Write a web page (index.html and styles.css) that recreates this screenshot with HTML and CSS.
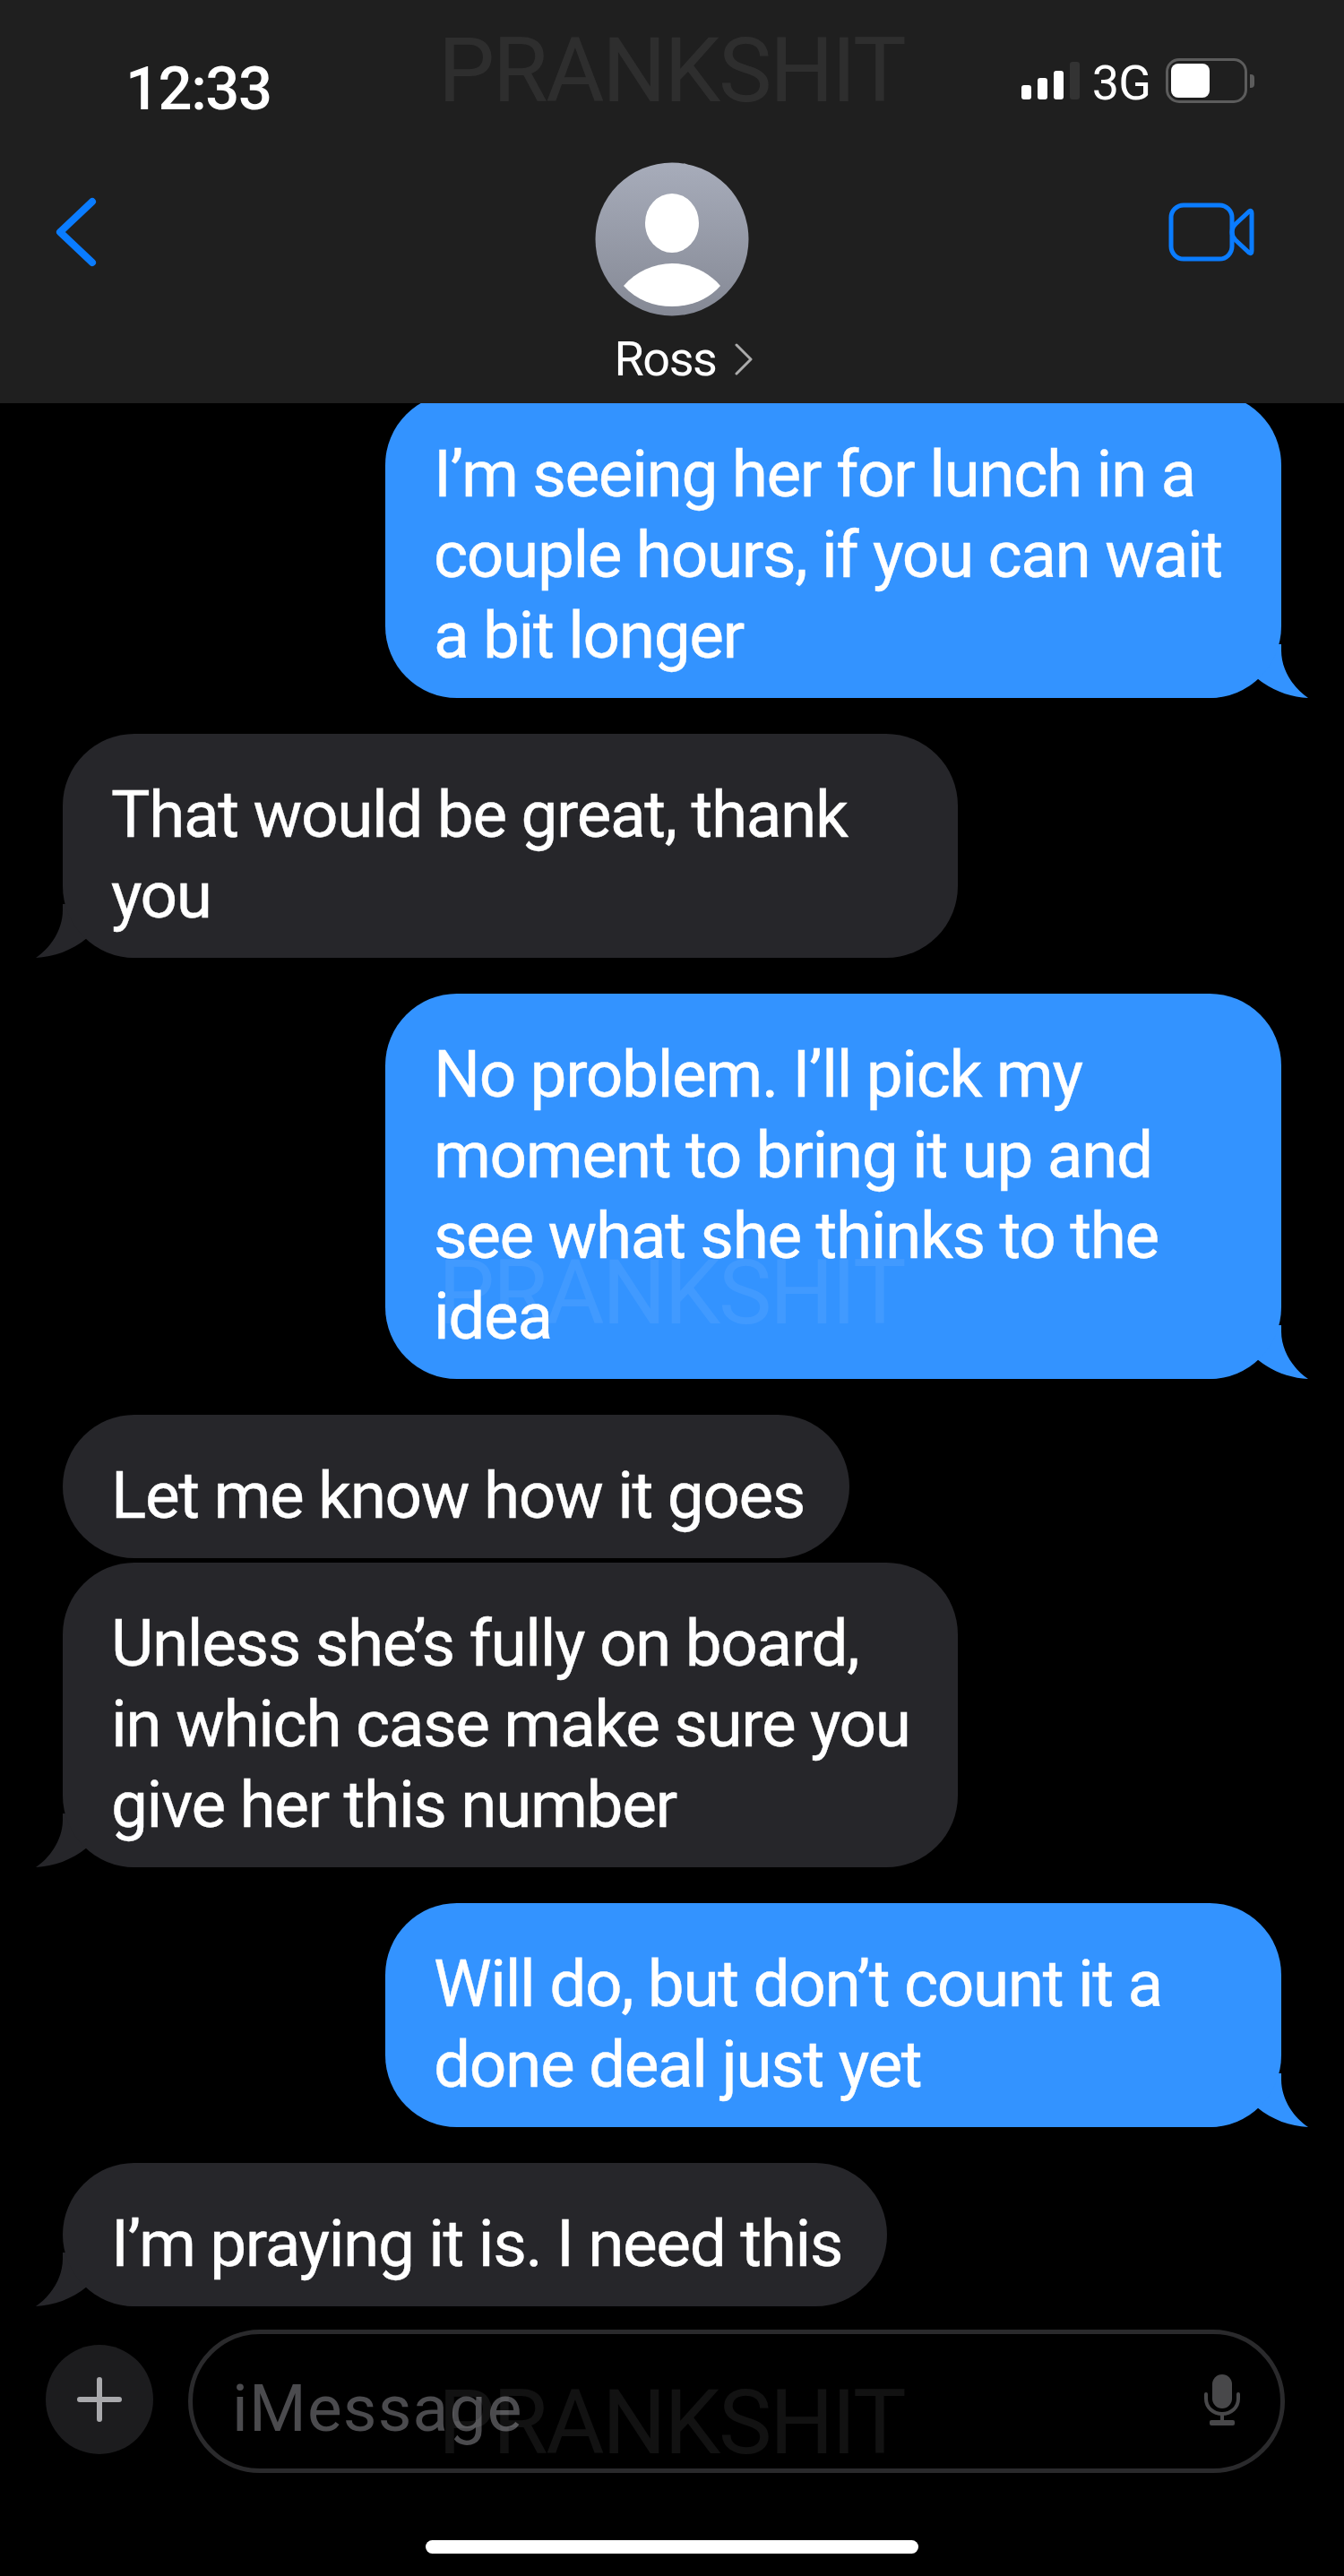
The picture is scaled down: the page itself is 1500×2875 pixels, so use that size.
FILE: index.html
```html
<!DOCTYPE html>
<html lang="en">
<head>
  <meta charset="UTF-8">
  <title>Ross - Messages</title>
  <link rel="stylesheet" href="styles.css">
</head>
<body>
  <div class="screen">
    <header class="header">
      <div class="status-bar">
        <span class="time">12:33</span>
        <div class="status-icons">
          <div class="signal">
            <span class="bar bar-1"></span>
            <span class="bar bar-2"></span>
            <span class="bar bar-3"></span>
            <span class="bar bar-4"></span>
          </div>
          <span class="network">3G</span>
          <div class="battery"><span class="battery-fill"></span></div>
          <span class="battery-cap"></span>
        </div>
      </div>

      <div class="nav-bar">
        <svg class="back-icon" width="46" height="78" viewBox="0 0 46 78">
          <path d="M41 5 L5 39 L41 73" fill="none" stroke="#0a7cff" stroke-width="8" stroke-linecap="round" stroke-linejoin="round"/>
        </svg>

        <div class="contact">
          <svg class="avatar" width="172" height="172" viewBox="0 0 172 172">
            <defs>
              <linearGradient id="avatar-bg" x1="0" y1="0" x2="0" y2="1">
                <stop offset="0" stop-color="#a7acba"/>
                <stop offset="1" stop-color="#858995"/>
              </linearGradient>
            </defs>
            <circle cx="86" cy="86" r="85.5" fill="url(#avatar-bg)"/>
            <ellipse cx="86" cy="68" rx="30" ry="33" fill="#fff"/>
            <path d="M32 138 C46 122 66 113 86 113 C106 113 126 122 140 138 C126 154 106 161 86 161 C66 161 46 154 32 138 Z" fill="#fff"/>
          </svg>
          <div class="contact-name">
            <span>Ross</span>
            <svg width="20" height="36" viewBox="0 0 20 36">
              <path d="M2 2 L18 18 L2 34" fill="none" stroke="#ababab" stroke-width="3" stroke-linecap="round" stroke-linejoin="round"/>
            </svg>
          </div>
        </div>

        <svg class="video-icon" width="96" height="66" viewBox="0 0 96 66">
          <rect x="3" y="3" width="68" height="60" rx="14" fill="none" stroke="#0a7cff" stroke-width="5"/>
          <path d="M71 33 Q71 28 75 24 L90 10 Q93 8 93 12 L93 54 Q93 58 90 56 L75 42 Q71 38 71 33 Z" fill="none" stroke="#0a7cff" stroke-width="5" stroke-linejoin="round"/>
        </svg>
      </div>
    </header>

    <main class="thread">
      <div class="bubble sent tail">I’m seeing her for lunch in a couple hours, if you can wait a bit longer</div>
      <div class="bubble received tail">That would be great, thank you</div>
      <div class="bubble sent tail">No problem. I’ll pick my moment to bring it up and see what she thinks to the idea</div>
      <div class="group">
        <div class="bubble received">Let me know how it goes</div>
        <div class="bubble received tail">Unless she’s fully on board, in which case make sure you give her this number</div>
      </div>
      <div class="bubble sent tail">Will do, but don’t count it a done deal just yet</div>
      <div class="bubble received tail">I’m praying it is. I need this</div>
    </main>

    <footer class="composer">
      <div class="plus-button">
        <svg width="50" height="50" viewBox="0 0 50 50">
          <path d="M25 3 V47 M3 25 H47" stroke="#a9a9ac" stroke-width="6" stroke-linecap="round"/>
        </svg>
      </div>
      <div class="input">
        <span class="placeholder">iMessage</span>
        <svg class="mic-icon" width="40" height="58" viewBox="0 0 40 58">
          <rect x="9" y="0" width="22" height="38" rx="11" fill="#48484a"/>
          <path d="M2 22 V27 C2 37 10 44 20 44 C30 44 38 37 38 27 V22" fill="none" stroke="#48484a" stroke-width="4" stroke-linecap="round"/>
          <path d="M20 44 V53" stroke="#48484a" stroke-width="4"/>
          <rect x="6" y="51" width="28" height="6" rx="2" fill="#48484a"/>
        </svg>
      </div>
    </footer>
    <div class="home-bar"></div>

    <span class="watermark mark-top">PRANKSHIT</span>
    <span class="watermark mark-middle">PRANKSHIT</span>
    <span class="watermark mark-bottom">PRANKSHIT</span>
  </div>
</body>
</html>
```
FILE: styles.css
```css
body {
  margin: 0;
  background-color: #000;
  color: #fff;
  font-family: Roboto, "Liberation Sans", sans-serif;
}
.screen {
  position: relative;
  width: 1500px;
  height: 2875px;
  overflow: hidden;
  background-color: #000;
}

/* header */
.header {
  position: relative;
  z-index: 1;
  height: 450px;
  background-color: #1f1f1f;
}
.status-bar {
  display: flex;
  justify-content: space-between;
  align-items: flex-start;
  padding: 66px 100px 0 140px;
  height: 120px;
  box-sizing: border-box;
}
.time {
  font-size: 67px;
  font-weight: 500;
  line-height: 66px;
  letter-spacing: -1.5px;
}
.status-icons {
  display: flex;
  align-items: flex-start;
}
.signal {
  display: flex;
  align-items: flex-end;
  gap: 7px;
  height: 42px;
  margin: 3px 14px 0 0;
}
.bar {
  width: 11px;
  background-color: #fff;
  border-radius: 3px;
}
.bar-1 { height: 16px; }
.bar-2 { height: 24px; }
.bar-3 { height: 32px; }
.bar-4 { height: 42px; background-color: #333; }
.network {
  font-size: 54px;
  line-height: 52px;
  letter-spacing: -1px;
  margin: 1px 17px 0 0;
}
.battery {
  width: 91px;
  height: 50px;
  margin-top: -1px;
  box-sizing: border-box;
  padding: 3px;
  border: 3px solid #5c5c5c;
  border-radius: 15px;
}
.battery-fill {
  display: block;
  width: 43px;
  height: 38px;
  background-color: #fff;
  border-radius: 8px;
}
.battery-cap {
  width: 5px;
  height: 15px;
  margin: 17px 0 0 3px;
  background-color: #5c5c5c;
  border-radius: 0 4px 4px 0;
}
.nav-bar {
  display: grid;
  grid-template-columns: 1fr auto 1fr;
  align-items: start;
  padding: 0 62px;
}
.back-icon {
  margin-top: 100px;
}
.video-icon {
  justify-self: end;
  margin: 106px 38px 0 0;
}
.contact {
  display: flex;
  flex-direction: column;
  align-items: center;
  margin-top: 61px;
}
.contact-name {
  display: flex;
  align-items: center;
  gap: 21px;
  margin: 18px 0 0 26px;
  font-size: 54px;
  line-height: 60px;
  letter-spacing: -1.5px;
}

/* messages */
.thread {
  display: flex;
  flex-direction: column;
  gap: 40px;
  margin-top: -11px;
  padding: 0 70px;
  isolation: isolate;
}
.group {
  display: flex;
  flex-direction: column;
  gap: 5px;
}
.bubble {
  position: relative;
  box-sizing: border-box;
  width: fit-content;
  padding: 45px 50px 25px 54px;
  border-radius: 80px;
  font-size: 73px;
  line-height: 90px;
  letter-spacing: -1.4px;
  -webkit-text-stroke: 0.4px #fff;
}
.sent {
  align-self: flex-end;
  max-width: 1000px;
  background-color: #3393ff;
}
.received {
  max-width: 999px;
  background-color: #26262a;
}
.tail::after {
  content: "";
  position: absolute;
  z-index: -1;
  bottom: 0;
  width: 120px;
  height: 60px;
  background-color: inherit;
  clip-path: path("M90 0 L90 7 C90 30 105 50 120 60 C100 59 80 52 63 38 C50 50 30 60 7 60 L0 60 L0 0 Z");
}
.sent.tail::after {
  right: -30px;
}
.received.tail::after {
  left: -30px;
  transform: scaleX(-1);
}

/* composer */
.composer {
  display: flex;
  gap: 39px;
  margin-top: 26px;
  padding-left: 51px;
}
.plus-button {
  display: flex;
  align-items: center;
  justify-content: center;
  width: 120px;
  height: 122px;
  margin-top: 17px;
  border-radius: 50%;
  background-color: #1c1c1e;
}
.input {
  display: flex;
  align-items: center;
  justify-content: space-between;
  box-sizing: border-box;
  width: 1224px;
  height: 160px;
  padding: 0 45px 0 44px;
  border: 5px solid #2a2a2c;
  border-radius: 80px;
}
.placeholder {
  font-size: 73px;
  line-height: 90px;
  letter-spacing: 1.2px;
  color: #4b4b4e;
  margin-top: 16px;
}
.mic-icon {
  margin-top: -2px;
}
.home-bar {
  width: 550px;
  height: 15px;
  margin: 75px auto 0;
  background-color: #fff;
  border-radius: 8px;
}

/* watermark sits over everything */
.watermark {
  position: absolute;
  z-index: 2;
  left: 489px;
  font-size: 100px;
  line-height: 100px;
  letter-spacing: -2.2px;
  color: rgba(255, 255, 255, 0.07);
  pointer-events: none;
}
.mark-top { top: 29px; }
.mark-middle { top: 1393px; }
.mark-bottom { top: 2654px; }
```
